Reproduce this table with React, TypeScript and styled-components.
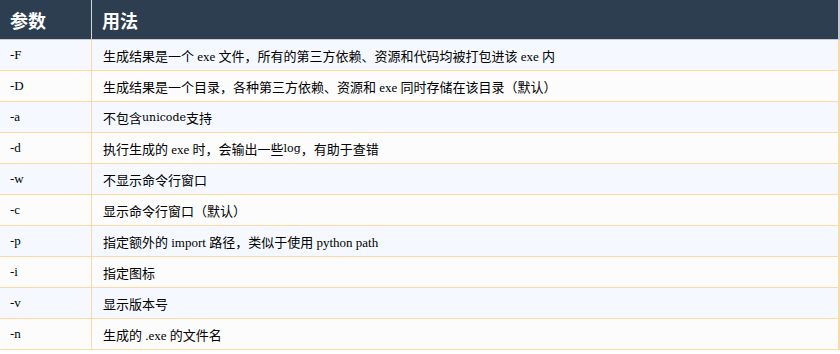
import React from "react";
import styled, { createGlobalStyle } from "styled-components";

const Global = createGlobalStyle`
  html, body { margin: 0; padding: 0; background: #ffffff; }
  body { font-family: "Liberation Serif", "Noto Sans CJK SC", serif; }
`;

const Table = styled.div`
  width: 840px;
  display: flex;
  flex-direction: column;
`;

const HeadRow = styled.div`
  display: grid;
  grid-template-columns: 92px 1fr;
  height: 39px;
  background: #2c3e50;
  border-bottom: 1px solid #c9ced4;
`;

const HeadCell = styled.div<{ $last?: boolean }>`
  display: flex;
  align-items: center;
  padding-left: 10px;
  color: #ffffff;
  font-family: "Noto Sans CJK SC", sans-serif;
  font-weight: 700;
  font-size: 18px;
  border-right: ${(p) => (p.$last ? "2px solid #c3c8ce" : "1px solid #d4d8dc")};
`;

const Row = styled.div<{ $odd: boolean }>`
  display: grid;
  grid-template-columns: 92px 1fr;
  height: 30px;
  background: ${(p) => (p.$odd ? "#f5f9ff" : "#fcfcfc")};
  border-bottom: 1px solid #fdd9a3;
`;

const Cell = styled.div<{ $last?: boolean }>`
  display: flex;
  align-items: center;
  padding-left: ${(p) => (p.$last ? "11px" : "10px")};
  font-size: 13px;
  color: #000000;
  white-space: pre;
  border-right: ${(p) => (p.$last ? "2px" : "1px")} solid #fdd9a3;
`;

const Song = styled.span`
  font-family: "DejaVu Serif", serif;
  font-size: 11px;
`;

type Item = { flag: string; desc: React.ReactNode };

const items: Item[] = [
  { flag: "-F", desc: "生成结果是一个 exe 文件，所有的第三方依赖、资源和代码均被打包进该 exe 内" },
  { flag: "-D", desc: "生成结果是一个目录，各种第三方依赖、资源和 exe 同时存储在该目录（默认）" },
  { flag: "-a", desc: <>不包含<Song>unicode</Song>支持</> },
  { flag: "-d", desc: <>执行生成的 exe 时，会输出一些<Song>log</Song>，有助于查错</> },
  { flag: "-w", desc: "不显示命令行窗口" },
  { flag: "-c", desc: "显示命令行窗口（默认）" },
  { flag: "-p", desc: "指定额外的 import 路径，类似于使用 python path" },
  { flag: "-i", desc: "指定图标" },
  { flag: "-v", desc: "显示版本号" },
  { flag: "-n", desc: "生成的 .exe 的文件名" },
];

export default function App() {
  return (
    <>
      <Global />
      <Table>
        <HeadRow>
          <HeadCell>参数</HeadCell>
          <HeadCell $last>用法</HeadCell>
        </HeadRow>
        {items.map((it, i) => (
          <Row key={it.flag} $odd={i % 2 === 0}>
            <Cell>{it.flag}</Cell>
            <Cell $last>{it.desc}</Cell>
          </Row>
        ))}
      </Table>
    </>
  );
}
